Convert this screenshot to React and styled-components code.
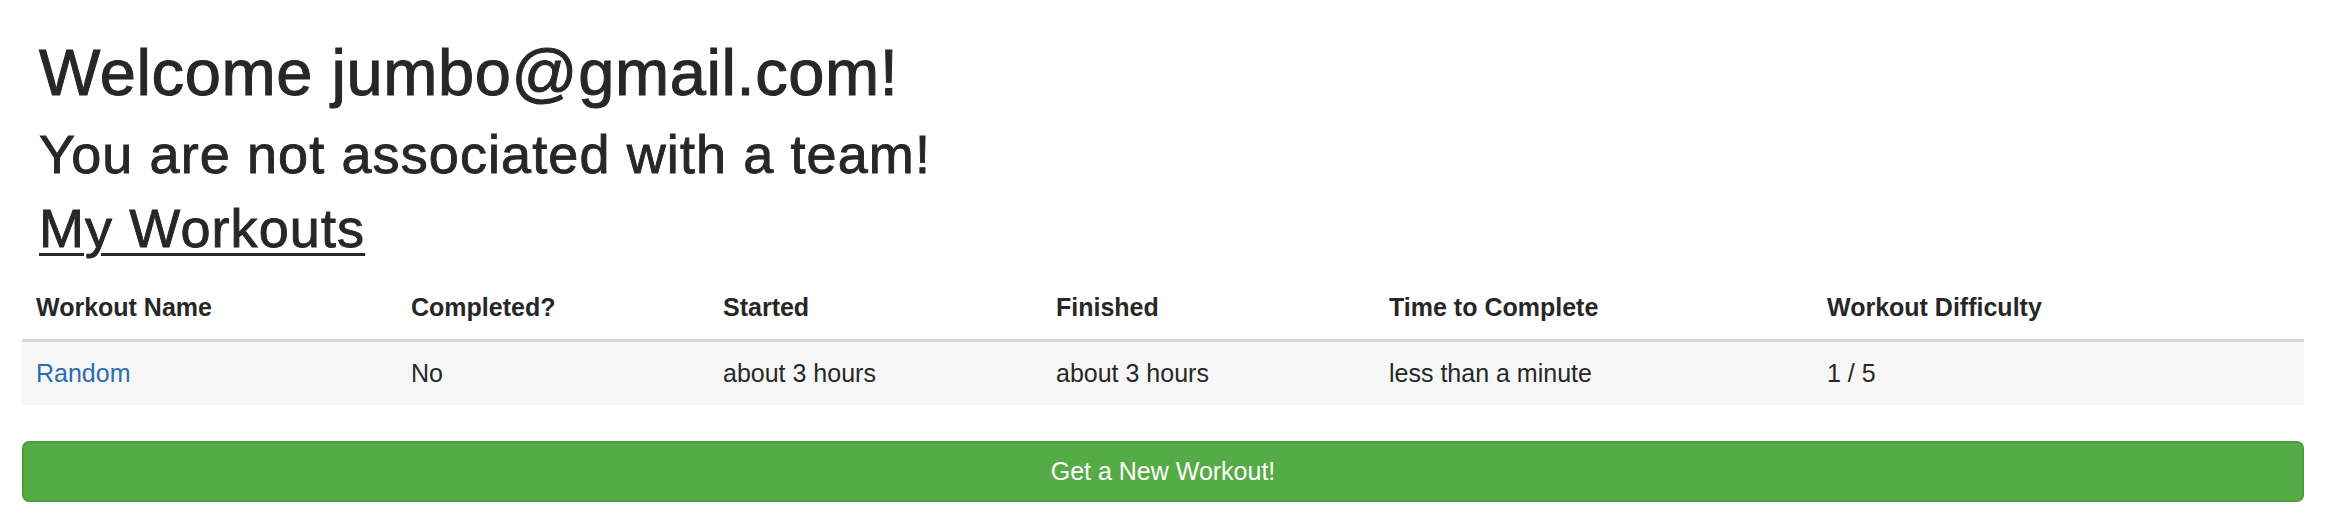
import React from 'react';
import styled, { createGlobalStyle } from 'styled-components';

const workouts = [
    {
        name: 'Random',
        completed: 'No',
        started: 'about 3 hours',
        finished: 'about 3 hours',
        duration: 'less than a minute',
        difficulty: '1 / 5',
    },
];

// widths include the cell padding (cells are border-box)
const columns = [
    { label: 'Workout Name', width: 375 },
    { label: 'Completed?', width: 312 },
    { label: 'Started', width: 333 },
    { label: 'Finished', width: 333 },
    { label: 'Time to Complete', width: 438 },
    { label: 'Workout Difficulty', width: 'auto' },
];

const GlobalStyle = createGlobalStyle`
    html, body {
        margin: 0;
        padding: 0;
        background: #ffffff;
    }
    body {
        font-family: "Liberation Sans", Arial, Helvetica, sans-serif;
        color: #272727;
    }
`;

/**
 * Outer page wrapper.
 */
const Page = styled.div`
    display: flex;
    flex-direction: column;
    padding: 0 24px 0 22px;
`;

const Intro = styled.div`
    display: flex;
    flex-direction: column;
    padding: 37px 0 17px 17px;
`;

const Title = styled.h1`
    margin: 0;
    font-size: 65px;
    line-height: 72px;
    font-weight: 400;
    letter-spacing: 0.6px;
    -webkit-text-stroke: 1px #272727;
`;

const Subtitle = styled.h2`
    margin: ${(p) => (p.$gap ? `${p.$gap}px` : '0')} 0 0;
    font-size: 54px;
    line-height: 60px;
    font-weight: 400;
    letter-spacing: 1.1px;
    -webkit-text-stroke: 0.9px #272727;
    text-decoration: ${(p) => (p.$underline ? 'underline' : 'none')};
    text-decoration-thickness: 3px;
    text-underline-offset: 6px;
`;

const Table = styled.table`
    width: 100%;
    border-collapse: collapse;
    border-spacing: 0;
    table-layout: fixed;
    margin-bottom: 36px;
    font-size: 25px;
    line-height: 36px;
`;

const HeadCell = styled.th`
    box-sizing: border-box;
    text-align: left;
    font-weight: 700;
    padding: 14px;
    border-bottom: 3px solid #d6d6d6;
    width: ${(p) => (typeof p.$width === 'number' ? `${p.$width}px` : p.$width)};
`;

const Row = styled.tr`
    background: ${(p) => (p.$striped ? '#f7f7f7' : 'transparent')};
`;

const Cell = styled.td`
    padding: 13px 14px 14px 14px;
`;

const Link = styled.a`
    color: #2d6bb2;
    text-decoration: none;
`;

const Button = styled.button`
    display: block;
    width: 100%;
    height: 61px;
    margin: 0;
    padding: 0;
    border: 2px solid #4a9f3c;
    border-radius: 7px;
    background: #55ac46;
    color: #ffffff;
    font-family: "Liberation Sans", Arial, Helvetica, sans-serif;
    font-size: 25px;
    text-align: center;
    cursor: pointer;
`;

export default function App() {
    return (
        <Page>
            <GlobalStyle />
            <Intro>
                <Title>Welcome jumbo@gmail.com!</Title>
                <Subtitle $gap={15}>You are not associated with a team!</Subtitle>
                <Subtitle $gap={14} $underline>My Workouts</Subtitle>
            </Intro>
            <Table>
                <thead>
                    <tr>
                        {columns.map((c) => (
                            <HeadCell key={c.label} $width={c.width}>
                                {c.label}
                            </HeadCell>
                        ))}
                    </tr>
                </thead>
                <tbody>
                    {workouts.map((w, i) => (
                        <Row key={w.name} $striped={i % 2 === 0}>
                            <Cell>
                                <Link href="#">{w.name}</Link>
                            </Cell>
                            <Cell>{w.completed}</Cell>
                            <Cell>{w.started}</Cell>
                            <Cell>{w.finished}</Cell>
                            <Cell>{w.duration}</Cell>
                            <Cell>{w.difficulty}</Cell>
                        </Row>
                    ))}
                </tbody>
            </Table>
            <Button type="button">Get a New Workout!</Button>
        </Page>
    );
}
